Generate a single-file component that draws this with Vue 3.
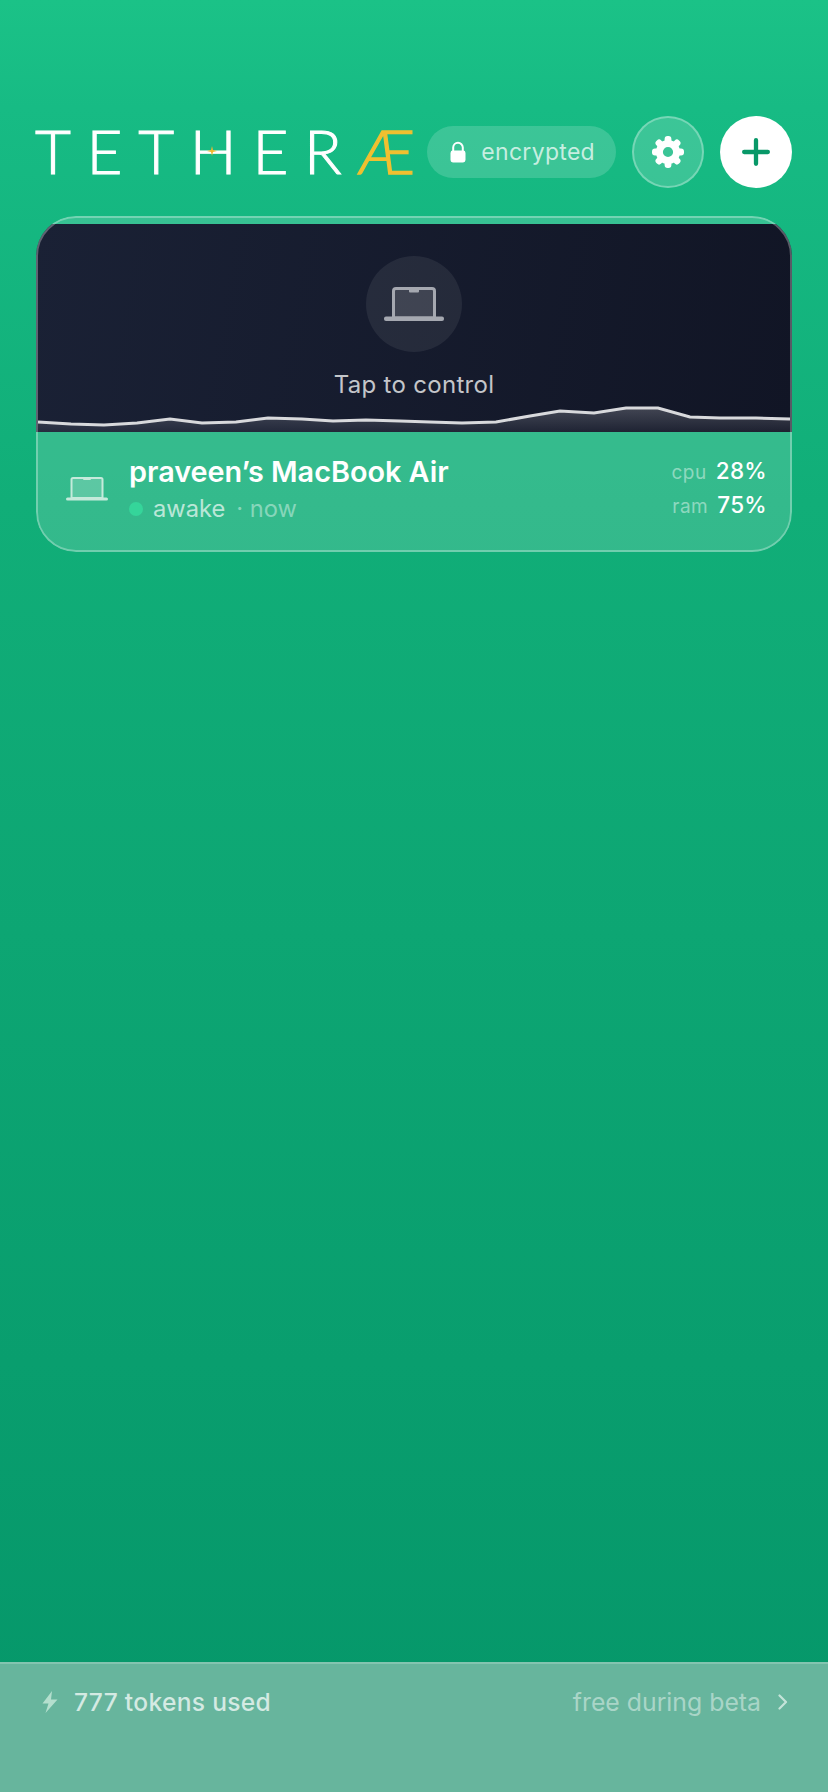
<script setup>
const sparkPoints = [[38,422],[71,424],[104,425],[137,423],[170,419],[202,423],[236,422],[268,418],[302,419],[333,421],[366,420],[400,421],[430,422],[462,423],[496,422],[530,416],[560,411],[594,413],[626,408],[658,408],[690,417],[720,418],[756,418],[790,419]]
  .map(([x, y]) => [x - 36, y - 384])
const line = sparkPoints.map(p => p.join(',')).join(' ')
const area = `2,48 ${line} 754,48`
const teeth = [0, 45, 90, 135, 180, 225, 270, 315]
</script>

<template>
  <div class="page">
    <main class="main">
      <header class="header">
        <h1 class="logo">TET<span class="h">H<svg class="star" viewBox="0 0 10 10"><path d="M5 0L6 4L10 5L6 6L5 10L4 6L0 5L4 4Z" fill="#f0b92d"/></svg></span>ER<span class="ae">Æ</span></h1>
        <div class="actions">
          <div class="pill">
            <svg class="lock" viewBox="0 0 16 22"><path d="M3.2 10V6.600a4.800 4.800 0 0 1 9.600 0V10" fill="none" stroke="#fff" stroke-width="2"/><rect x="0.500" y="9.500" width="15" height="12" rx="2.400" fill="#fff"/></svg>
            <span>encrypted</span>
          </div>
          <button class="round glass" aria-label="settings">
            <svg viewBox="0 0 32 32" class="gear">
              <circle cx="16" cy="16" r="8.600" fill="none" stroke="#fff" stroke-width="7"/>
              <rect v-for="a in teeth" :key="a" x="12.600" y="0" width="6.800" height="9" rx="3" fill="#fff" :transform="`rotate(${a} 16 16)`"/>
            </svg>
          </button>
          <button class="round solid" aria-label="add">
            <svg viewBox="0 0 26 26" class="plus"><path d="M13 2v22M2 13h22" stroke="#089868" stroke-width="4" stroke-linecap="round"/></svg>
          </button>
        </div>
      </header>

      <section class="card">
        <div class="preview">
          <div class="badge">
            <svg viewBox="0 0 60 34" class="big-laptop">
              <path d="M12 1.500h36a2.500 2.500 0 0 1 2.500 2.500V31h-41V4a2.500 2.500 0 0 1 2.500-2.500Z" fill="#fff" fill-opacity=".12" stroke="#a5a8b0" stroke-width="3"/>
              <path d="M25 2h10v2.500a1 1 0 0 1-1 1h-8a1 1 0 0 1-1-1Z" fill="#a5a8b0"/>
              <rect x="0" y="29.500" width="60" height="4.500" rx="2" fill="#a5a8b0"/>
            </svg>
          </div>
          <p class="tap">Tap to control</p>
          <svg class="spark" viewBox="0 0 756 48" preserveAspectRatio="none">
            <defs>
              <linearGradient id="sparkFill" x1="0" y1="0" x2="0" y2="1">
                <stop offset="0" stop-color="#fff" stop-opacity=".2"/>
                <stop offset="1" stop-color="#fff" stop-opacity=".05"/>
              </linearGradient>
            </defs>
            <polygon :points="area" fill="url(#sparkFill)"/>
            <polyline :points="line" fill="none" stroke="#d8d9dc" stroke-width="3"/>
          </svg>
        </div>
        <div class="info">
          <svg viewBox="0 0 42 24" class="small-laptop">
            <path d="M7 1h28a1.500 1.500 0 0 1 1.500 1.500V21h-31V2.500A1.500 1.500 0 0 1 7 1Z" fill="#fff" fill-opacity=".2" stroke="#c5eadb" stroke-width="2"/>
            <path d="M17 1h8v1a1 1 0 0 1-1 1h-6a1 1 0 0 1-1-1Z" fill="#c5eadb"/>
            <rect x="0" y="20.500" width="42" height="3" rx="1.500" fill="#c5eadb"/>
          </svg>
          <div class="names">
            <div class="title">praveen’s MacBook Air</div>
            <div class="status">
              <i class="dot"></i>
              <span class="awake">awake</span>
              <span class="now">· now</span>
            </div>
          </div>
          <div class="stats">
            <div class="stat"><span class="label">cpu</span><span class="value">28%</span></div>
            <div class="stat"><span class="label">ram</span><span class="value">75%</span></div>
          </div>
        </div>
      </section>
    </main>

    <footer class="footer">
      <div class="tokens">
        <svg viewBox="0 0 16 22" class="bolt"><path d="M10 0L0.500 12.500H6.500L3.500 22L15.500 8.500H9Z" fill="#b4dfce"/></svg>
        <span>777 tokens used</span>
      </div>
      <div class="beta">
        <span>free during beta</span>
        <svg viewBox="0 0 10 16" class="chev"><path d="M1.500 1.500L8 8L1.500 14.500" fill="none" stroke="#c4e4d9" stroke-width="2.200" stroke-linecap="round" stroke-linejoin="round"/></svg>
      </div>
    </footer>
  </div>
</template>

<style>
html, body { margin: 0; padding: 0; }
</style>

<style scoped>
.page {
  width: 828px;
  height: 1792px;
  display: flex;
  flex-direction: column;
  font-family: Inter, "Liberation Sans", sans-serif;
  color: #fff;
  background: linear-gradient(180deg, #1bc287 0%, #17bb84 6%, #11ae78 28%, #059669 100%);
  overflow: hidden;
}
.main { flex: 1; padding: 116px 36px 0; }
.header { display: flex; align-items: center; justify-content: space-between; height: 72px; }
.logo {
  margin: 0 0 4px -1px;
  font-family: Lato, sans-serif;
  font-weight: 300;
  font-size: 62px;
  line-height: 72px;
  letter-spacing: 15.700px;
  white-space: nowrap;
  -webkit-text-stroke: 1px #fff;
}
.h { position: relative; display: inline-block; }
.star { position: absolute; left: 17px; top: 32px; width: 10px; height: 10px; -webkit-text-stroke: 0; }
.ae { color: #f0c030; letter-spacing: 0; -webkit-text-stroke: 1.300px #f0c030; }
.actions { display: flex; align-items: center; gap: 16px; }
.pill {
  display: flex; align-items: center; gap: 15px;
  height: 52px; padding: 0 21px 0 23px;
  border-radius: 26px;
  background: rgba(255,255,255,.16);
  font-size: 23px; letter-spacing: .3px;
  color: rgba(255,255,255,.72);
  box-sizing: border-box;
}
.lock { width: 16px; height: 22px; }
.round {
  width: 72px; height: 72px; padding: 0; border-radius: 50%;
  display: flex; align-items: center; justify-content: center;
  box-sizing: border-box;
}
.glass { background: rgba(255,255,255,.16); border: 2px solid rgba(255,255,255,.3); }
.solid { background: #fff; border: 0; }
.gear { width: 32px; height: 32px; }
.plus { width: 28px; height: 28px; }
.card {
  position: relative;
  margin-top: 28px;
  height: 336px;
  padding-top: 8px;
  box-sizing: border-box;
  border-radius: 40px;
  overflow: hidden;
  background: rgba(255,255,255,.15);
}
.card::after {
  content: "";
  position: absolute; inset: 0;
  border: 2px solid rgba(255,255,255,.3);
  border-radius: 40px;
  pointer-events: none;
}
.preview {
  position: relative;
  height: 208px;
  display: flex; flex-direction: column; align-items: center;
  background: linear-gradient(100deg, #1a2135 0%, #111525 100%);
}
.badge {
  margin-top: 32px;
  width: 96px; height: 96px; border-radius: 50%;
  background: rgba(255,255,255,.07);
  display: flex; align-items: center; justify-content: center;
}
.big-laptop { width: 60px; height: 34px; }
.tap { margin: 18px 0 0; font-size: 24px; line-height: 30px; letter-spacing: .3px; color: rgba(255,255,255,.75); }
.spark { position: absolute; left: 0; bottom: 0; width: 756px; height: 48px; }
.info { display: flex; align-items: center; height: 120px; padding: 0 25px 0 30px; box-sizing: border-box; }
.small-laptop { width: 42px; height: 24px; flex: none; margin-top: -6px; }
.names { flex: 1; margin-left: 21px; margin-top: -6px; }
.title { font-size: 28.800px; font-weight: 600; line-height: 36px; }
.status { display: flex; align-items: center; margin-top: 3px; font-size: 23.700px; line-height: 32px; }
.dot { width: 14px; height: 14px; border-radius: 50%; background: #35d59a; margin-right: 10px; }
.awake { color: rgba(255,255,255,.68); }
.now { color: rgba(255,255,255,.42); margin-left: 11px; }
.stats { display: flex; flex-direction: column; gap: 5px; align-items: flex-end; margin-top: -8px; }
.stat { display: flex; align-items: baseline; gap: 9px; line-height: 27px; }
.label { font-size: 19px; letter-spacing: .5px; color: rgba(255,255,255,.45); }
.value { font-size: 22.500px; font-weight: 500; letter-spacing: .3px; }
.footer {
  height: 130px; box-sizing: border-box;
  padding: 18px 40px 0 42px;
  display: flex; justify-content: space-between; align-items: flex-start;
  background: #67b59d;
  border-top: 2px solid #83c4b0;
  line-height: 40px;
}
.tokens { display: flex; align-items: center; gap: 16px; color: rgba(255,255,255,.72); font-size: 24.600px; font-weight: 500; letter-spacing: .3px; }
.bolt { width: 16px; height: 22px; }
.beta { display: flex; align-items: center; gap: 17px; color: rgba(255,255,255,.45); font-size: 24.800px; }
.chev { width: 10px; height: 16px; }
</style>
